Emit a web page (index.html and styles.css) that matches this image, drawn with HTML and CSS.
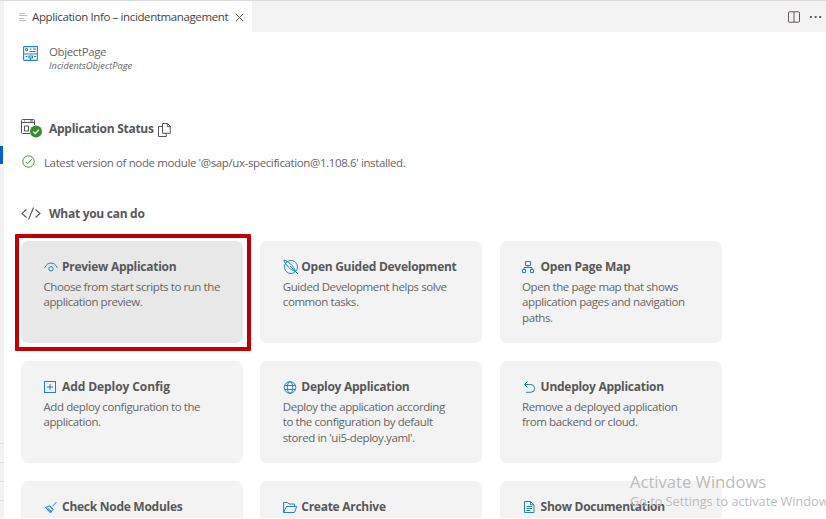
FILE: index.html
```html
<!DOCTYPE html>
<html lang="en">
<head>
<meta charset="utf-8">
<title>Application Info – incidentmanagement</title>
<link rel="stylesheet" href="styles.css">
</head>
<body>
<div class="window">
  <aside class="side">
    <i class="side-active"></i>
    <i class="side-line"></i><i class="side-line"></i><i class="side-line"></i><i class="side-line"></i>
  </aside>
  <div class="editor">
    <header class="tabs">
      <div class="tab">
        <svg class="tab-icon" width="9" height="10" viewBox="0 0 9 10" stroke="#bdbdbd"><path d="M0 1.5h6M0 3.5h8M0 6.5h5M0 8.5h7"/></svg>
        <span class="tab-title">Application Info – incidentmanagement</span>
        <svg class="close" width="9" height="9" viewBox="0 0 9 9" stroke="#555" fill="none"><path d="M.8.8l7.4 7.4M8.2.8L.8 8.2"/></svg>
      </div>
      <div class="actions">
        <svg width="12" height="12" viewBox="0 0 12 12" fill="none" stroke="#65535f"><rect x=".5" y=".8" width="11" height="10.4" rx="1"/><path d="M6 1v10"/></svg>
        <svg width="12" height="12" viewBox="0 0 12 12" fill="#59617b"><path d="M0 5h2v2H0zM4.6 5h2v2h-2zM9.2 5h2v2h-2z"/></svg>
      </div>
    </header>
    <main class="page">
      <section class="object">
        <svg width="15" height="15" viewBox="0 0 15 15" fill="none" stroke="#2382bd" stroke-width="1.1"><rect x=".6" y=".6" width="13.8" height="13.8" rx=".6"/><path d="M.6 8h13.8M7 3h1.5M10 3h3M6.5 5.5h6M2.5 10.5h2M6 10h3.5v2H6zM11 10.500h2M7.500 12v2"/><circle cx="3.600" cy="3.600" r="1.100"/></svg>
        <div>
          <div class="object-name">ObjectPage</div>
          <div class="object-id">IncidentsObjectPage</div>
        </div>
      </section>
      <h2 class="heading status">
        <svg width="22" height="20" viewBox="0 0 22 20" fill="none" stroke="#555"><path d="M9 14.500H1.500q-1 0-1-1v-12q0-1 1-1h11q1 0 1 1V6M.5 3.500h13M3 2h.8M9 2h3M3.500 7h4v5h-4z"/><circle cx="15" cy="12.500" r="6" fill="#388a34" stroke="none"/><path d="M12.200 12.700l2 2 3.700-4" stroke="#fff" stroke-width="1.200"/></svg>
        <span class="status-title">Application Status</span>
        <svg class="copy" width="13" height="14" viewBox="0 0 13 14" fill="none" stroke="#555"><path d="M4.500.5h5l2.800 3v6.800H4.500zM9.300.5v3.200h3M4.500 3.500h-4v10h7.800v-3.200"/></svg>
      </h2>
      <p class="message">
        <svg width="13" height="13" viewBox="0 0 13 13" fill="none" stroke="#3d943a"><circle cx="6.500" cy="6.500" r="5.700"/><path d="M3.600 6.700l2 2 4.200-4.500"/></svg>
        <span class="message-text">Latest version of node module '@sap/ux-specification@1.108.6' installed.</span>
      </p>
      <h2 class="heading todo">
        <svg width="20" height="13" viewBox="0 0 20 13" fill="none" stroke="#555" stroke-width="1.100"><path d="M5.500 2.500l-4.500 4 4.500 4M14.500 2.500l4.500 4-4.500 4M12.500.5l-5 12"/></svg>
        <span class="todo-title">What you can do</span>
      </h2>
      <div class="cards">
        <article class="card selected">
          <h3><svg viewBox="0 0 14 14"><path d="M.8 7.800C3 1.500 11 1.500 13.200 7.800"/><circle cx="7" cy="8.800" r="2.200"/></svg><span>Preview Application</span></h3>
          <p>Choose from start scripts to run the application preview.</p>
        </article>
        <article class="card">
          <h3><svg class="large" viewBox="0 0 16 16"><circle cx="8" cy="8" r="6.500"/><path d="M.8 1C5 2 11 7 12.500 12.500C7.500 11 2.500 6 .8 1zM7 7l8 8"/></svg><span>Open Guided Development</span></h3>
          <p>Guided Development helps solve common tasks.</p>
        </article>
        <article class="card">
          <h3><svg class="map" viewBox="0 0 14 14"><path d="M4.500 1.500h5v4h-5zM1.500 9.500h3v3h-3zM9.500 9.500h3v3h-3zM7 5.500V7.500M3 9.500v-2h8v2"/></svg><span>Open Page Map</span></h3>
          <p>Open the page map that shows application pages and navigation paths.</p>
        </article>
        <article class="card">
          <h3><svg class="add" viewBox="0 0 14 14"><rect x="1.500" y="1.500" width="11" height="11"/><path d="M7 4v6M4 7h6"/></svg><span class="wide">Add Deploy Config</span></h3>
          <p>Add deploy configuration to the application.</p>
        </article>
        <article class="card">
          <h3><svg viewBox="0 0 14 14"><circle cx="7" cy="7.500" r="5.800"/><ellipse cx="7" cy="7.500" rx="2.700" ry="5.800"/><path d="M1.800 5.500h10.400M1.800 9.500h10.400"/></svg><span>Deploy Application</span></h3>
          <p>Deploy the application according<br>to the configuration by default<br>stored in 'ui5-deploy.yaml'.</p>
        </article>
        <article class="card">
          <h3><svg viewBox="0 0 14 14"><path d="M5.500 1.500l-3 3 3 3M2.500 4.500h6.300a3.800 3.800 0 0 1 0 7.800H4"/></svg><span>Undeploy Application</span></h3>
          <p>Remove a deployed application from backend or cloud.</p>
        </article>
        <article class="card">
          <h3><svg viewBox="0 0 14 14"><path d="M12.500 2L8.300 6.500M5.500 5.500l4 4M1.500 7.500l4-1.500 3.200 3.500L6.500 13zM3.500 8l3.500 3M3 9.500l3.800 2"/></svg><span>Check Node Modules</span></h3>
        </article>
        <article class="card">
          <h3><svg viewBox="0 0 14 14"><path d="M.6 12.500v-10h4l1.300 1.500h5.600v2.500M.6 12.500l2.800-6h10.300l-2.200 6z"/></svg><span>Create Archive</span></h3>
        </article>
        <article class="card">
          <h3><svg viewBox="0 0 14 14"><path d="M2.500 1.500h6l3.500 3.300v7.700H2.500zM8.500 1.500v3.300H12M4.500 6.500h5.500M4.500 8.500h5.500M4.500 10.500h4"/></svg><span>Show Documentation</span></h3>
        </article>
      </div>
    </main>
  </div>
  <div class="watermark">
    <div class="wm-title">Activate Windows</div>
    <div class="wm-text">Go to Settings to activate Windows.</div>
  </div>
</div>
</body>
</html>
```
FILE: styles.css
```css
* { box-sizing: border-box; }
body { margin: 0; background: #fff; color: #666; font: 11.5px/15.6px "Open Sans", sans-serif; letter-spacing: -.38px; }
svg { flex: none; display: block; }
h2, h3, p { margin: 0; }
.window { position: relative; display: flex; height: 518px; overflow: hidden; border-top: 1px solid #dcdcdc; white-space: nowrap; }
.side { width: 4px; background: #f3f3f3; }
.side i { display: block; }
.side-active { width: 3px; height: 18px; margin: 145px 0 279px; background: #0861c2; }
.side-line { height: 1px; margin-bottom: 18px; background: #e0e0e0; }
.editor { flex: 1; min-width: 0; }
.tabs { display: flex; justify-content: space-between; height: 31px; background: #f3f3f3; }
.tab { display: flex; align-items: center; width: 248px; padding: 1px 0 0 15px; background: #fff; color: #444; }
.tab-title { width: 196px; margin-left: 4px; }
.close { margin-left: 7px; }
.actions { display: flex; align-items: center; gap: 10px; padding-right: 4px; }
.page { padding: 12px 0 0 17px; }
.object { display: flex; gap: 11px; height: 75px; padding-left: 2px; }
.object > svg { margin-top: 2px; }
.object-name { line-height: 16px; }
.object-id { font-size: 9.3px; line-height: 12px; font-style: italic; letter-spacing: 0; }
.heading { display: flex; align-items: center; font-size: 12px; line-height: 18px; color: #585858; letter-spacing: -.28px; }
.status { height: 20px; }
.status-title { width: 104px; margin-left: 6px; }
.copy { margin: 2px 0 0 5px; }
.message { display: flex; align-items: center; height: 18px; margin-top: 14.500px; padding-left: 1px; }
.message svg { margin-top: -3px; }
.message-text { margin-left: 9px; }
.todo { margin-top: 33px; }
.todo-title { margin-left: 8px; }
.cards { display: grid; grid-template-columns: repeat(3, 222px); grid-auto-rows: 102.500px; gap: 17.500px 17.300px; margin-top: 18px; }
.card { position: relative; padding: 17px 20px 0 22.500px; background: #f3f3f3; border-radius: 7px; white-space: normal; }
.selected { background: #e8e8e8; }
.selected::after { content: ""; position: absolute; inset: -7px -8px -8px -6px; border: 4px solid #c00000; border-radius: 1px; }
.card h3 { display: flex; align-items: center; height: 18px; font-size: 12px; color: #585858; letter-spacing: -.27px; white-space: nowrap; }
.card h3 .wide { letter-spacing: -.08px; }
.card h3 svg { width: 14px; height: 14px; margin-right: 4.500px; fill: none; stroke: #2382bd; stroke-width: 1; }
.card h3 .large { width: 16px; height: 16px; margin-right: 2.500px; }
.card h3 .map { margin-left: -1px; margin-right: 5.500px; }
.card h3 .add { margin-left: -.5px; margin-right: 5px; }
.card p { margin-top: 3px; letter-spacing: -.42px; }
.watermark { position: absolute; left: 630px; top: 470px; color: #bcbcbc; letter-spacing: 0; }
.wm-title { font-size: 16.600px; line-height: 21px; }
.wm-text { font-size: 12.700px; line-height: 18px; }
```
